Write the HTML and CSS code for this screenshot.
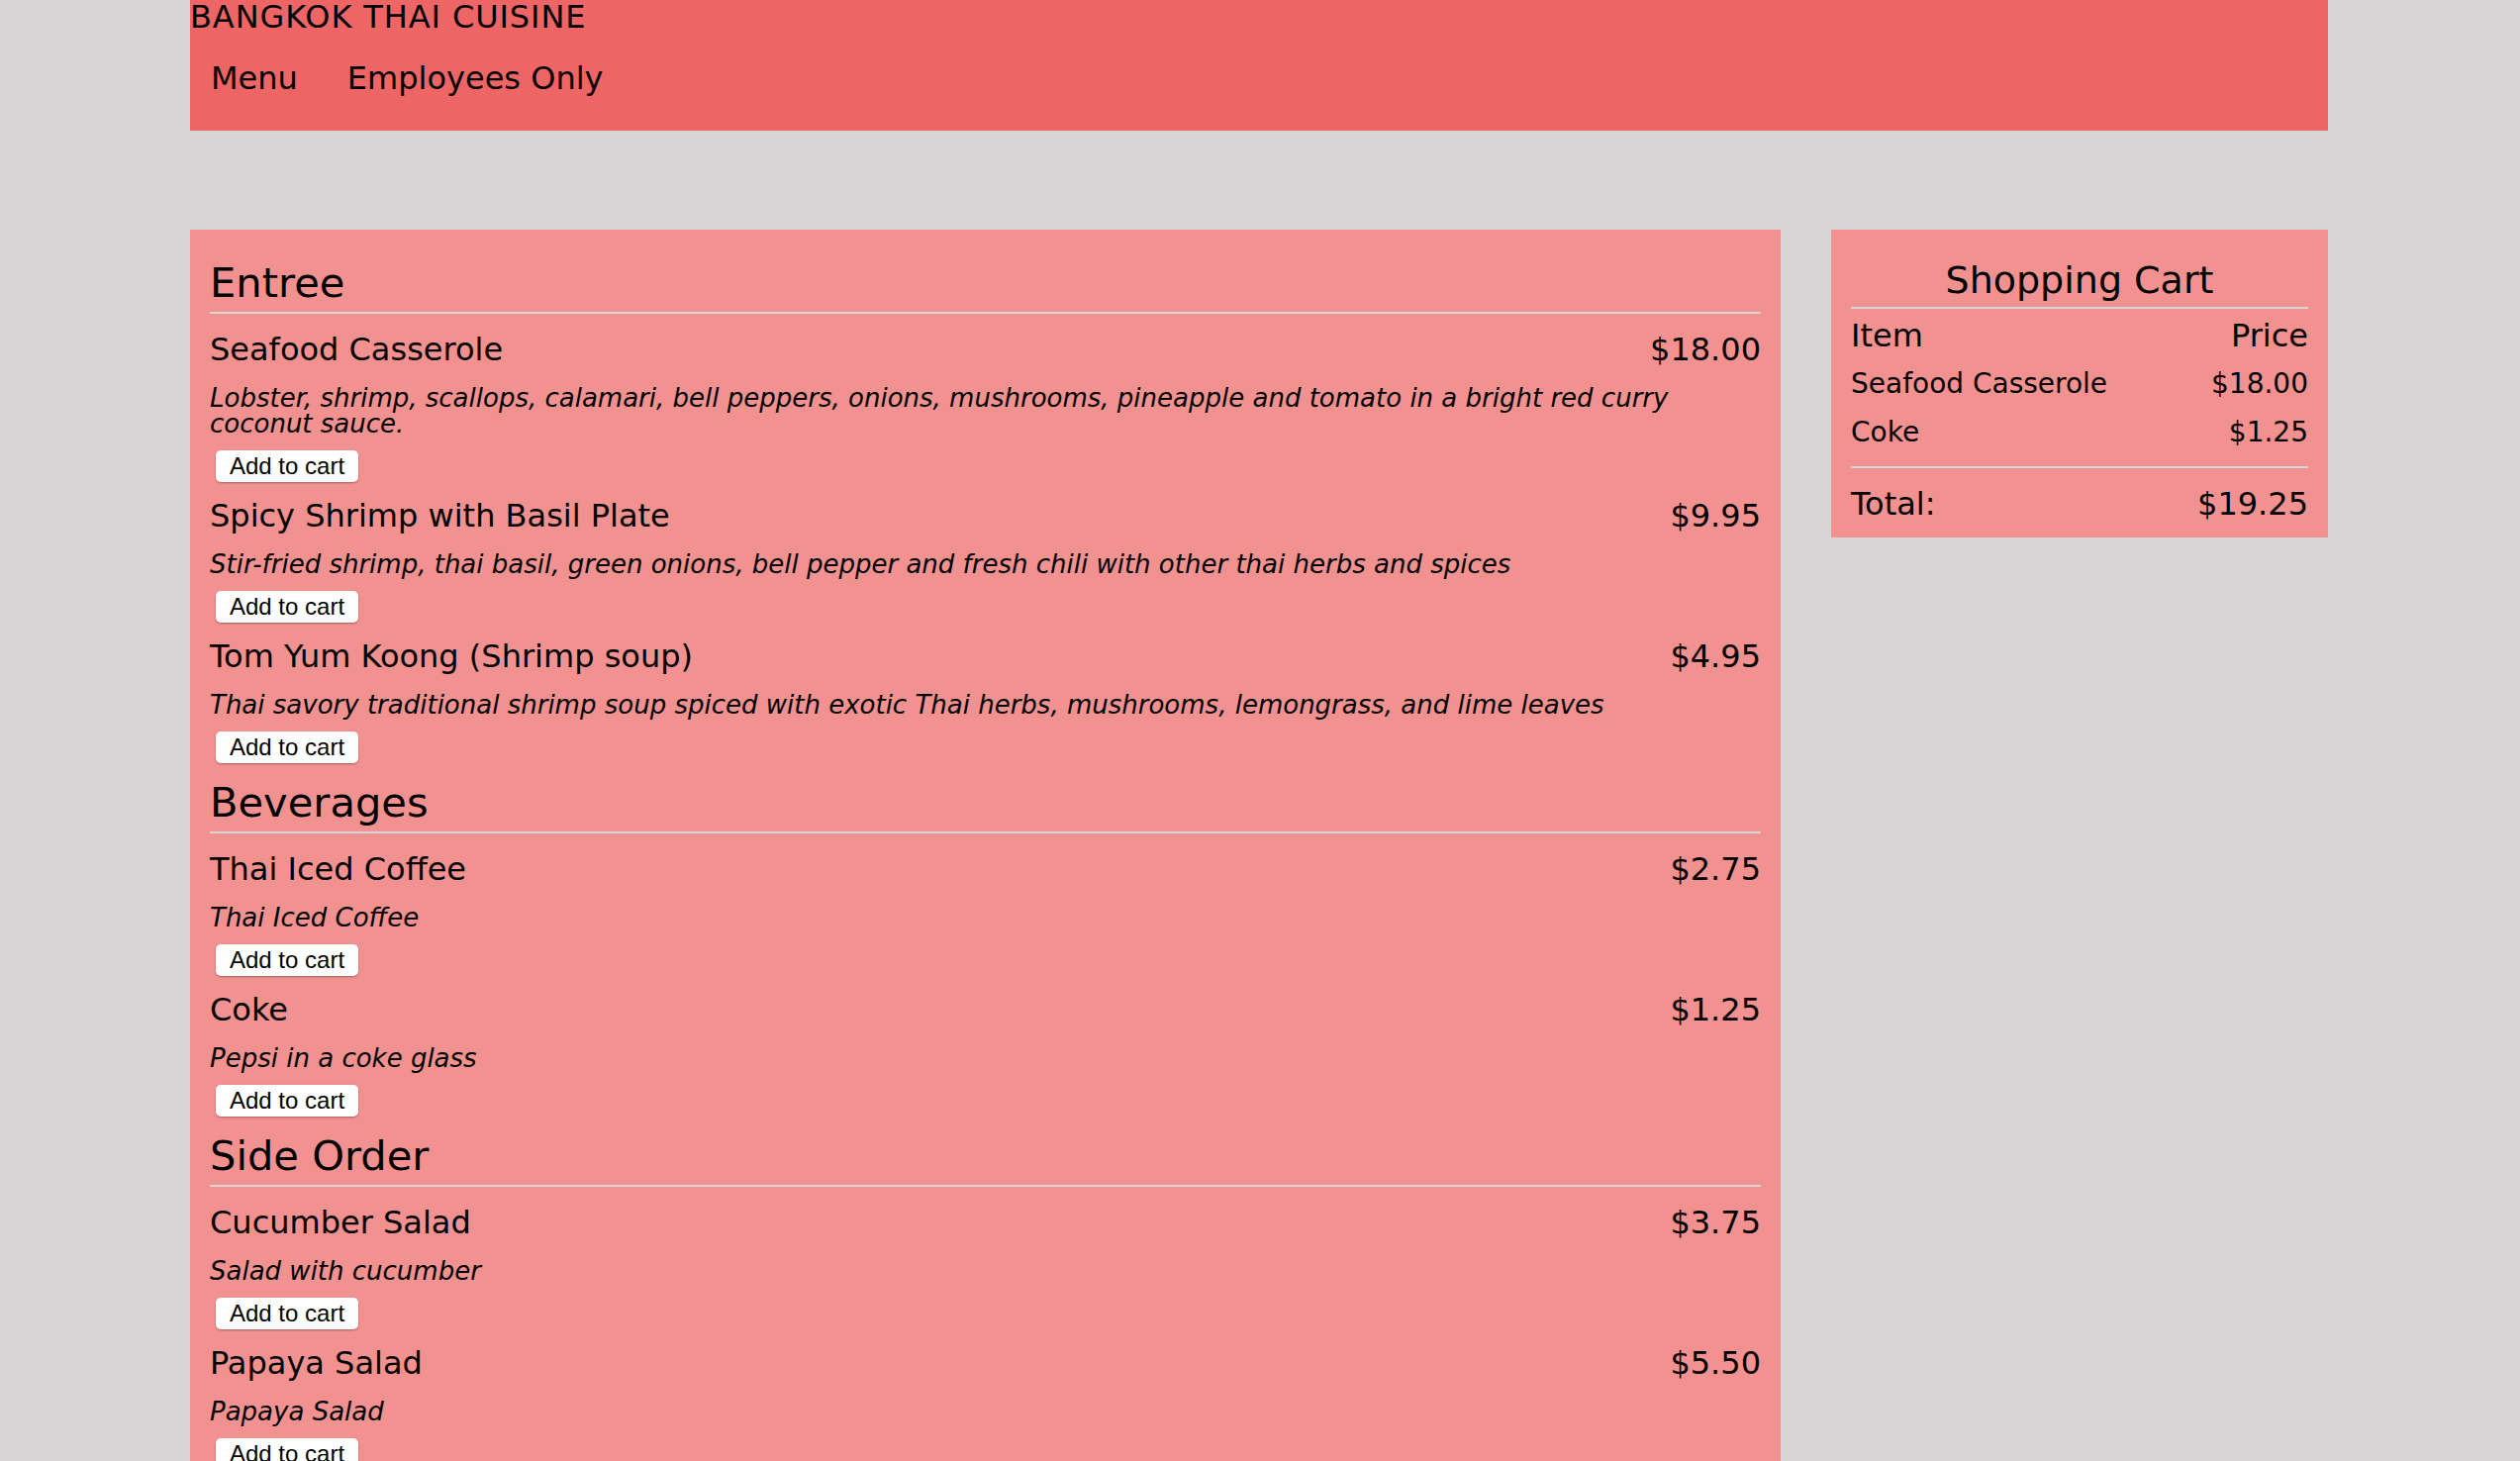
FILE: index.html
```html
<!DOCTYPE html>
<html lang="en">
<head>
<meta charset="utf-8">
<title>Bangkok Thai Cuisine</title>
<link rel="stylesheet" href="styles.css">
</head>
<body>
<div class="page">
  <header class="site-header">
    <div class="brand">BANGKOK THAI CUISINE</div>
    <nav class="nav">
      <a class="nav-link" href="#">Menu</a>
      <a class="nav-link" href="#">Employees Only</a>
    </nav>
  </header>

  <div class="main">
    <section class="menu">
      <div class="category">
        <h2 class="category-title">Entree</h2>
        <div class="items">
          <div class="item">
            <div class="item-row"><span class="item-name">Seafood Casserole</span><span class="item-price">$18.00</span></div>
            <p class="item-desc">Lobster, shrimp, scallops, calamari, bell peppers, onions, mushrooms, pineapple and tomato in a bright red curry coconut sauce.</p>
            <button class="add-btn" type="button">Add to cart</button>
          </div>
          <div class="item">
            <div class="item-row"><span class="item-name">Spicy Shrimp with Basil Plate</span><span class="item-price">$9.95</span></div>
            <p class="item-desc">Stir-fried shrimp, thai basil, green onions, bell pepper and fresh chili with other thai herbs and spices</p>
            <button class="add-btn" type="button">Add to cart</button>
          </div>
          <div class="item">
            <div class="item-row"><span class="item-name">Tom Yum Koong (Shrimp soup)</span><span class="item-price">$4.95</span></div>
            <p class="item-desc">Thai savory traditional shrimp soup spiced with exotic Thai herbs, mushrooms, lemongrass, and lime leaves</p>
            <button class="add-btn" type="button">Add to cart</button>
          </div>
        </div>
      </div>

      <div class="category">
        <h2 class="category-title">Beverages</h2>
        <div class="items">
          <div class="item">
            <div class="item-row"><span class="item-name">Thai Iced Coffee</span><span class="item-price">$2.75</span></div>
            <p class="item-desc">Thai Iced Coffee</p>
            <button class="add-btn" type="button">Add to cart</button>
          </div>
          <div class="item">
            <div class="item-row"><span class="item-name">Coke</span><span class="item-price">$1.25</span></div>
            <p class="item-desc">Pepsi in a coke glass</p>
            <button class="add-btn" type="button">Add to cart</button>
          </div>
        </div>
      </div>

      <div class="category">
        <h2 class="category-title">Side Order</h2>
        <div class="items">
          <div class="item">
            <div class="item-row"><span class="item-name">Cucumber Salad</span><span class="item-price">$3.75</span></div>
            <p class="item-desc">Salad with cucumber</p>
            <button class="add-btn" type="button">Add to cart</button>
          </div>
          <div class="item">
            <div class="item-row"><span class="item-name">Papaya Salad</span><span class="item-price">$5.50</span></div>
            <p class="item-desc">Papaya Salad</p>
            <button class="add-btn" type="button">Add to cart</button>
          </div>
        </div>
      </div>
    </section>

    <aside class="cart">
      <h3 class="cart-title">Shopping Cart</h3>
      <div class="cart-head"><span>Item</span><span>Price</span></div>
      <div class="cart-lines">
        <div class="cart-line"><span>Seafood Casserole</span><span>$18.00</span></div>
        <div class="cart-line"><span>Coke</span><span>$1.25</span></div>
      </div>
      <div class="cart-total"><span>Total:</span><span>$19.25</span></div>
    </aside>
  </div>
</div>
</body>
</html>
```

FILE: styles.css
```css
html, body {
  margin: 0;
  padding: 0;
}

body {
  background: #d7d5d6;
  color: #000;
  font-family: "DejaVu Sans", Verdana, sans-serif;
}

.page {
  width: 2160px;
  margin: 0 0 0 192px;
}

/* Header */
.site-header {
  background: #ee6566;
  padding-bottom: 34px;
}

.brand {
  font-size: 32px;
  line-height: 34px;
  letter-spacing: 0.9px;
}

.nav {
  display: flex;
  gap: 50px;
  padding-left: 21px;
  margin-top: 26px;
  font-size: 32px;
  line-height: 38px;
}

.nav-link {
  color: #000;
  text-decoration: none;
}

/* Main layout */
.main {
  display: flex;
  align-items: flex-start;
  gap: 51px;
  margin-top: 100px;
}

.menu {
  width: 1607px;
  box-sizing: border-box;
  background: #f19291;
  padding: 30px 20px 0 20px;
}

.category {
  padding-bottom: 16px;
}

.category-title {
  margin: 0;
  font-weight: normal;
  font-size: 41.6px;
  line-height: 48px;
  padding-bottom: 5px;
  border-bottom: 2px solid #d9d5d5;
}

.items {
  padding-top: 2px;
}

.item {
  padding-top: 15px;
}

.item-row {
  display: flex;
  justify-content: space-between;
  font-size: 32px;
  line-height: 38px;
}

.item-desc {
  margin: 17px 0 0 0;
  font-size: 26px;
  line-height: 26px;
  font-style: italic;
}

.add-btn {
  display: block;
  margin: 14px 0 0 6px;
  height: 32px;
  padding: 0 14px;
  font-family: "Liberation Sans", Arial, sans-serif;
  font-size: 24px;
  line-height: 32px;
  color: #000;
  background: #fff;
  border: none;
  border-radius: 5px;
  box-shadow: 0 1px 2px rgba(90, 30, 30, 0.45);
}

/* Cart */
.cart {
  width: 502px;
  box-sizing: border-box;
  background: #f19291;
  padding: 29px 20px 15px 20px;
}

.cart-title {
  margin: 0;
  font-weight: normal;
  font-size: 38px;
  line-height: 44px;
  text-align: center;
  padding-bottom: 5px;
  border-bottom: 2px solid #d9d5d5;
}

.cart-head {
  display: flex;
  justify-content: space-between;
  margin-top: 8px;
  font-size: 32px;
  line-height: 38px;
}

.cart-lines {
  margin-top: 5px;
  padding-bottom: 10px;
  border-bottom: 2px solid #d9d5d5;
}

.cart-line {
  display: flex;
  justify-content: space-between;
  font-size: 28px;
  line-height: 49px;
}

.cart-total {
  display: flex;
  justify-content: space-between;
  margin-top: 17px;
  font-size: 32px;
  line-height: 38px;
}
```
